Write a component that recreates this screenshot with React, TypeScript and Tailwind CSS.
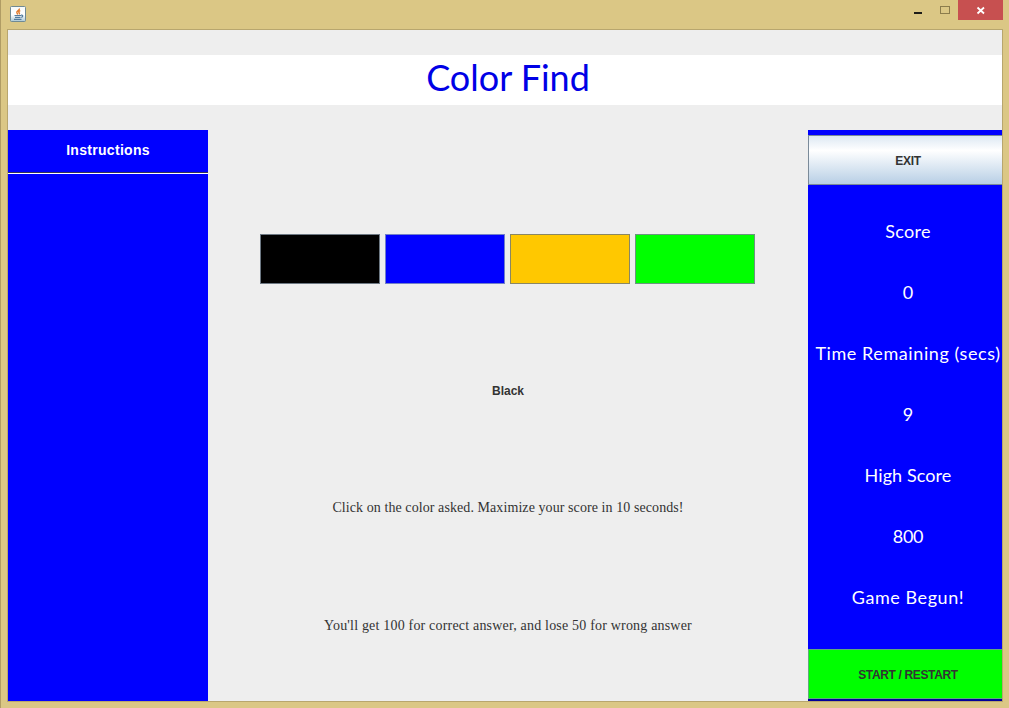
const swatches = [
  'bg-black border-[#6d7883]',
  'bg-[#0000ff] border-[#7280c8]',
  'bg-[#ffc800] border-[#8a8763]',
  'bg-[#00ff00] border-[#6b9680]',
];

const stats = [
  { text: 'Score', spacing: 'tracking-[0.3px]' },
  { text: '0', spacing: 'tracking-normal' },
  { text: 'Time Remaining (secs)', spacing: 'tracking-[0.58px]' },
  { text: '9', spacing: 'tracking-normal' },
  { text: 'High Score', spacing: 'tracking-[0.1px]' },
  { text: '800', spacing: 'tracking-[-0.3px]' },
  { text: 'Game Begun!', spacing: 'tracking-[0.55px]' },
];

function JavaIcon() {
  return (
    <svg width="16" height="16" viewBox="0 0 16 16" fill="none">
      <defs>
        <linearGradient id="tile" x1="0" y1="0" x2="0" y2="1">
          <stop offset="0" stopColor="#f7fafa" />
          <stop offset="0.55" stopColor="#ffffff" />
          <stop offset="1" stopColor="#a9c6d4" />
        </linearGradient>
      </defs>
      <rect x="0.5" y="0.5" width="15" height="15" rx="1" fill="url(#tile)" stroke="#708a94" />
      <path d="M9.400 2.500c.5 1.800-2.800 2.300-2.600 4 .1.700.8 1.200 1 2M10.300 4.600c-1.600.600-1.900 1.600-1 2.400.3.400.2.900-.3 1.300" stroke="#e27b2c" strokeWidth="1.400" />
      <path d="M4.500 9.500h6.500M5 11.300h5.500M4 13.400h7.500M11 9.200c2.400-.5 2.200 1.700.2 2.200" stroke="#537b9d" strokeWidth="1.200" />
    </svg>
  );
}

function TitleBar() {
  return (
    <header className="flex h-[29px] shrink-0 items-start justify-between pl-[9px] pr-[6px]">
      <div className="pt-[6px]">
        <JavaIcon />
      </div>
      <div className="flex">
        <div className="h-5 w-[27px]">
          <svg width="27" height="20"><rect x="6" y="12" width="8" height="2" fill="#1d1c18" /></svg>
        </div>
        <div className="h-5 w-[23px]">
          <svg width="23" height="20" fill="none"><rect x="5.500" y="6.500" width="9" height="7" stroke="#8b7c4c" /></svg>
        </div>
        <div className="h-5 w-[45px] bg-[#c75050]">
          <svg width="45" height="20" fill="none"><path d="M19.500 7.500l6.500 6M26 7.500l-6.500 6" stroke="#fff" strokeWidth="1.800" /></svg>
        </div>
      </div>
    </header>
  );
}

export default function App() {
  return (
    <div className="flex h-[708px] w-[1009px] flex-col overflow-hidden border-l border-[#b09c64] bg-[#dbc785] font-['Liberation_Sans',sans-serif]">
      <TitleBar />
      <main className="ml-[6px] flex h-[673px] w-[996px] flex-col overflow-hidden border border-[#b8a66e] bg-[#eeeeee]">
        <div className="mt-[25px] flex h-[50px] shrink-0 items-start justify-center bg-white pl-[6px]">
          <h1 className="whitespace-nowrap font-['Lato',sans-serif] text-[36px] leading-[44px] text-[#0000e6]">Color Find</h1>
        </div>
        <div className="mt-[25px] flex h-[571px] w-[1000px] shrink-0">
          <aside className="flex w-[200px] flex-col bg-[#0000ff]">
            <h2 className="flex h-[42px] items-center justify-center pb-[2px] text-[14px] font-bold tracking-[0.3px] text-white">Instructions</h2>
            <div className="h-[2px] border-b border-t border-b-white border-t-[#333355]" />
          </aside>
          <section className="flex w-[600px] flex-col items-center text-[#333333]">
            <div className="mt-[104px] flex gap-[5px] pr-px">
              {swatches.map((style) => (
                <button key={style} className={`h-[50px] w-[120px] border ${style}`} />
              ))}
            </div>
            <p className="mt-[97px] text-[12px] leading-[20px] font-bold">Black</p>
            <p className="mt-[97px] whitespace-nowrap font-['Liberation_Serif',serif] text-[14px] leading-[20px] tracking-[0.08px]">Click on the color asked. Maximize your score in 10 seconds!</p>
            <p className="mt-[98px] whitespace-nowrap font-['Liberation_Serif',serif] text-[14px] leading-[20px] tracking-[0.19px]">You'll get 100 for correct answer, and lose 50 for wrong answer</p>
          </section>
          <aside className="flex w-[200px] flex-col bg-[#0000ff] pt-[5px]">
            <button className="h-[50px] shrink-0 border border-[#7a8a99] bg-linear-to-b from-[#dde8f3] via-white via-30% to-[#b8cfe5] pt-[2px] text-[12px] font-bold tracking-[-0.35px] text-[#333333]">EXIT</button>
            <div className="mt-[16px] flex flex-col">
              {stats.map(({ text, spacing }) => (
                <p key={text} className={`h-[61px] whitespace-nowrap text-center font-['Lato',sans-serif] text-[18px] leading-[61px] text-white ${spacing}`}>{text}</p>
              ))}
            </div>
            <button className="mt-[21px] h-[50px] shrink-0 border border-[#5faa7b] bg-[#00ff00] pt-[2px] text-[12px] font-bold tracking-[-0.35px] text-[#333333]">START / RESTART</button>
            <div className="h-[2px] bg-[#000099]" />
          </aside>
        </div>
      </main>
    </div>
  );
}
